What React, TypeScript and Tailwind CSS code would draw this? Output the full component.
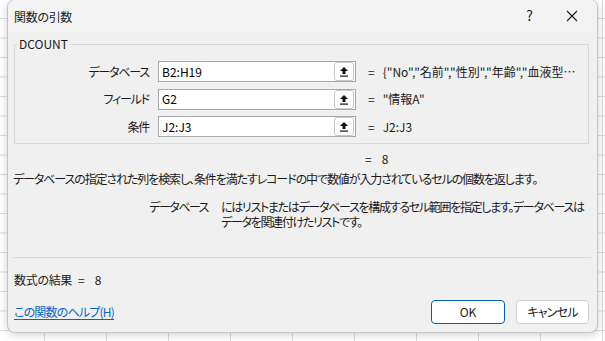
const jp = "font-['Yu_Gothic_UI','Noto_Sans_CJK_JP',sans-serif] [font-feature-settings:'palt']";

const args = [
  { label: "データベース", value: "B2:H19", result: '{"No","名前","性別","年齢","血液型…' },
  { label: "フィールド", value: "G2", result: '"情報A"' },
  { label: "条件", value: "J2:J3", result: "J2:J3" },
];

function RefButton() {
  return (
    <div className="w-[20px] h-[19px] mr-px border border-[#c8c8c8] rounded-[3px] bg-white flex items-center justify-center">
      <svg width="10" height="11" viewBox="0 0 10 11">
        <path d="M5 1 L1 5 H3.5 V8 H6.5 V5 H9 Z" fill="#111" />
        <rect x="1" y="9.5" width="8" height="1.2" fill="#111" />
      </svg>
    </div>
  );
}

function ArgRow({ label, value, result }: { label: string; value: string; result: string }) {
  return (
    <div className="flex items-center h-[21px]">
      <div className="w-[135px] text-right pr-[1px] text-[12px] tracking-[-1.2px] text-[#1a1a1a]">{label}</div>
      <div className="ml-[8px] w-[198px] h-[21px] bg-white border border-[#a8a8a8] flex items-center">
        <span className="flex-1 pl-[3px] text-[12px] text-black">{value}</span>
        <RefButton />
      </div>
      <span className="ml-[12px] text-[12px] text-[#1a1a1a]">=</span>
      <span className="ml-[8px] text-[12px] text-[#1a1a1a] whitespace-nowrap">{result}</span>
    </div>
  );
}

export default function App() {
  return (
    <div
      className={`w-[605px] h-[341px] overflow-hidden bg-white bg-[linear-gradient(to_right,#dadada_1px,transparent_1px),linear-gradient(to_bottom,#dadada_1px,transparent_1px)] bg-size-[62px_19.5px] bg-position-[44px_18px] ${jp}`}
    >
      <div className="ml-[7px] w-[591px] h-[334px] rounded-[8px] border border-[#c4c4c4] bg-[#f0f0f0] shadow-[0_2px_8px_rgba(0,0,0,0.18)] flex flex-col overflow-hidden -mt-px">
        <div className="h-[31px] shrink-0 bg-[#f3f3f3] flex items-center pl-[6px]">
          <span className="text-[12px] tracking-[-0.3px] text-[#1a1a1a] mt-[2px]">関数の引数</span>
          <span className="ml-auto mr-[33px] text-[14px] text-[#1a1a1a]">?</span>
          <svg className="mr-[19px]" width="12" height="12" viewBox="0 0 12 12">
            <path d="M1 1 L11 11 M11 1 L1 11" stroke="#1a1a1a" strokeWidth="1.1" />
          </svg>
        </div>

        <fieldset className="ml-[6px] mt-[6px] w-[575px] h-[107px] border border-[#d8d8d8] px-0 pt-[8px] pb-0">
          <legend className="ml-[3px] px-px text-[12px] text-[#1a1a1a] leading-[14px]">DCOUNT</legend>
          <div className="flex flex-col gap-[6.5px] mt-[2px]">
            {args.map((a) => (
              <ArgRow key={a.label} {...a} />
            ))}
          </div>
        </fieldset>

        <div className="mt-[7px] h-[16px] flex items-center text-[12px] text-[#1a1a1a]">
          <span className="ml-[357px]">=</span>
          <span className="ml-[10px]">8</span>
        </div>
        <div className="mt-[4px] ml-[5px] h-[16px] text-[12px] tracking-[-1.1px] text-[#1a1a1a] leading-[16px] whitespace-nowrap">
          データベースの指定された列を検索し、条件を満たすレコードの中で数値が入力されているセルの個数を返します。
        </div>
        <div className="mt-[12px] flex text-[12px] text-[#1a1a1a] leading-[15px] whitespace-nowrap">
          <div className="w-[200px] text-right shrink-0 tracking-[-1.5px]">データベース</div>
          <div className="ml-[13px] tracking-[-1.3px]">
            にはリストまたはデータベースを構成するセル範囲を指定します。データベースは
            <br />
            データを関連付けたリストです。
          </div>
        </div>

        <div className="mt-[28px] ml-[5px] w-[578px] h-px bg-[#d8d8d8]" />

        <div className="mt-[14px] ml-[6px] h-[16px] text-[12px] text-[#1a1a1a] leading-[16px] whitespace-nowrap">
          <span className="tracking-[-0.3px]">数式の結果</span>
          <span className="ml-[6px]">=</span>
          <span className="ml-[10px]">8</span>
        </div>

        <div className="mt-[12px] flex items-center">
          <a className="ml-[6px] text-[12px] tracking-[-0.8px] text-[#0066cc] underline underline-offset-2">この関数のヘルプ(H)</a>
          <button className="ml-auto w-[74px] h-[24px] rounded-[4px] bg-white border border-[#005fb8] text-[12px] text-[#1a1a1a]">
            OK
          </button>
          <button className="ml-[11px] mr-[8px] w-[73px] h-[24px] rounded-[4px] bg-white border border-[#d0d0d0] text-[12px] tracking-[-0.8px] text-[#1a1a1a]">
            キャンセル
          </button>
        </div>
      </div>
    </div>
  );
}
